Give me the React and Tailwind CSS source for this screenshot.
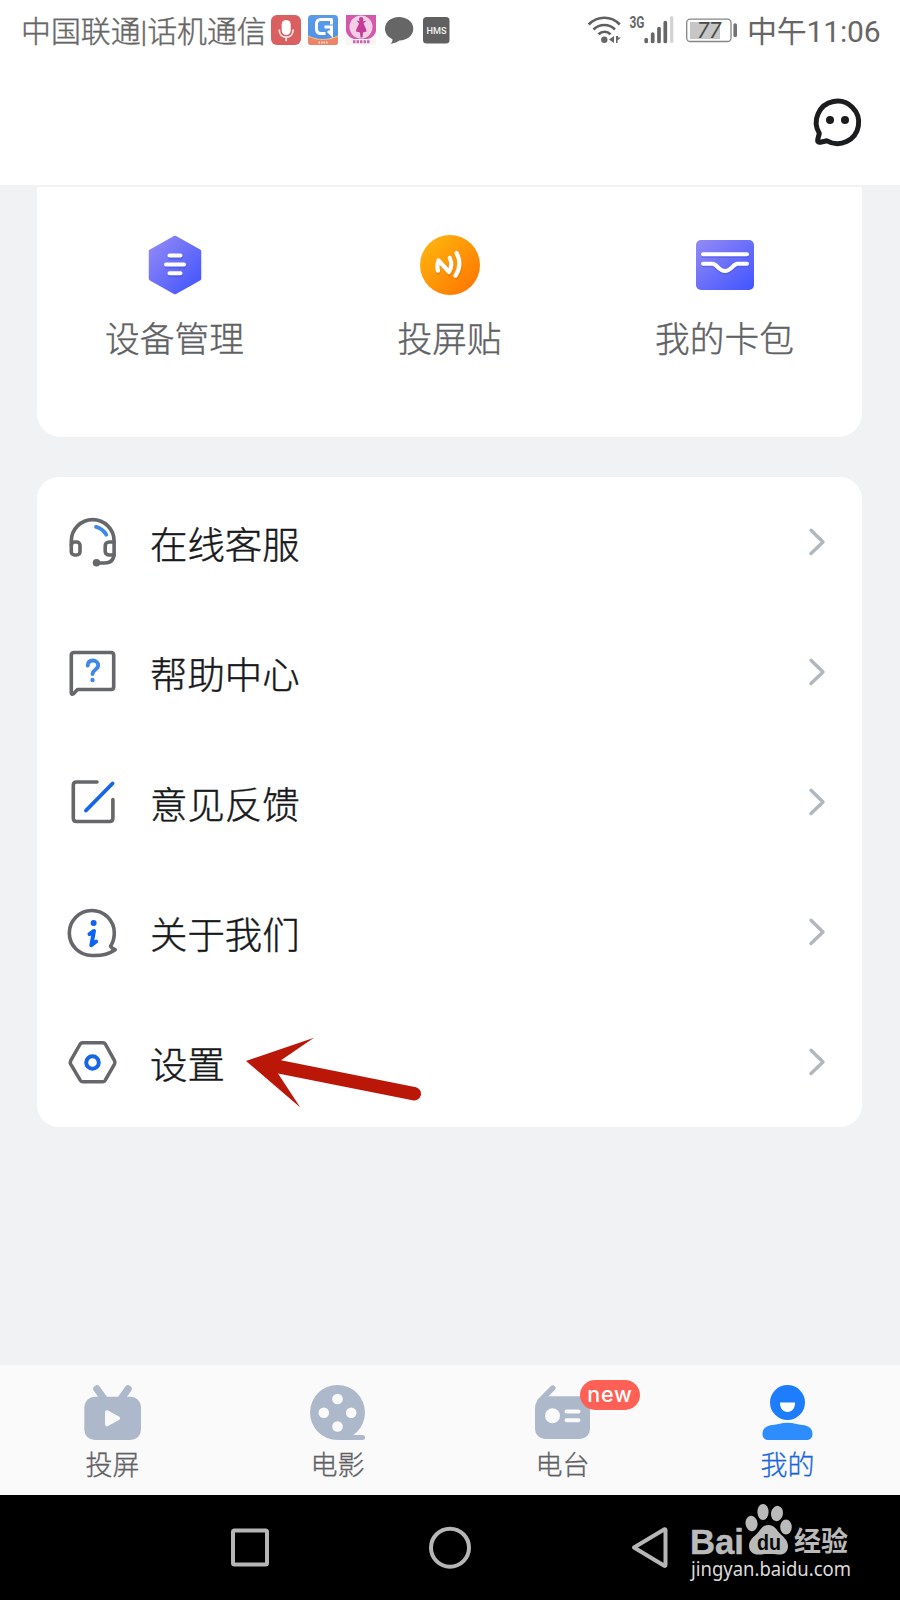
const GREY = '#66676a';
const MUTED = '#adb9cb';

/* Every drawing below uses the screen's own coordinate space through its viewBox. */
function Art({ x, y, w, h, className = '', children }) {
  return (
    <svg width={w} height={h} viewBox={`${x} ${y} ${w} ${h}`} fill="none" strokeLinecap="round" strokeLinejoin="round" className={`block shrink-0 ${className}`}>
      {children}
    </svg>
  );
}

function NotificationIcons() {
  return (
    <Art x={268} y={10} w={184} h={40}>
      <defs>
        <linearGradient id="appBlue" x1="0" y1="0" x2="0" y2="1">
          <stop offset="0" stopColor="#5b9ce8" />
          <stop offset="1" stopColor="#4f8fe6" />
        </linearGradient>
      </defs>
      <rect x="271" y="15" width="30" height="30" rx="6" fill="#d95f60" />
      <rect x="281.700" y="20" width="9" height="15" rx="4.500" fill="#fff" />
      <path d="M279.300 30c0 4.600 3 7.200 6.900 7.200s6.900-2.600 6.900-7.200M286.200 37.500v3" stroke="#fbe9e9" strokeWidth="1.700" />
      <rect x="308" y="15" width="30" height="30" rx="3.500" fill="url(#appBlue)" />
      <path d="M308 36c5 2.500 10 3.500 15 3.500s10-1 15-3.500v6a3 3 0 0 1-3 3h-24a3 3 0 0 1-3-3z" fill="#ee8467" />
      <path d="M308 36c5 2.500 10 3.500 15 3.500s10-1 15-3.500" stroke="#f0c08a" strokeWidth="1.200" />
      <path d="M332.500 19.500h-11.500q-4.500 0-4.500 4.500v5q0 4.500 4.500 4.500h4.500M324.500 27h7v7.500l-3.500-3.500M331.500 19.500v5" stroke="#fff" strokeWidth="3" strokeLinecap="butt" strokeLinejoin="miter" />
      <path d="M318.500 42.600h9" stroke="#fbe3d8" strokeWidth="2" strokeDasharray="1.500 1" strokeLinecap="butt" />
      <rect x="346" y="15" width="30" height="30" fill="#faf3f8" />
      <path d="M346 15h30v16c-1 4-4 7-8 8h-14c-4-1-7-4-8-8z" fill="#d458ac" />
      <circle cx="361" cy="27" r="11.500" fill="#f3cfe6" />
      <path d="M361 17c2.500 0 3 3 1.500 4.500l4-1-3 3c.8 2 3 5 3 8l-3.500 1-.5 5h-2l-.5-5-4-1c0-3 2.500-6 3-8l-2.500-3 3.500 1c-1.500-1.500-1.200-4.500 1-4.500z" fill="#c43a98" />
      <path d="M353 41.700h16.500" stroke="#cc62ab" strokeWidth="3" strokeDasharray="2.500 1" strokeLinecap="butt" />
      <path d="M399 17c8 0 14.300 5 14.300 11.800S407 40.500 399.500 40.500c-2 1.500-5 3-8.800 3.200 1.300-1.200 1.900-2.800 1.700-4.500-4.500-2-7.400-5.700-7.400-10.400C385 22 391 17 399 17z" fill="#666" />
      <rect x="423" y="17" width="26.500" height="26.500" rx="3.500" fill="#606060" />
      <text x="426.500" y="33.500" textLength="20" lengthAdjust="spacingAndGlyphs" fontFamily="Roboto, sans-serif" fontSize="8.500" fontWeight="500" fill="#f2f2f2">HMS</text>
    </Art>
  );
}

function SystemIcons() {
  return (
    <Art x={584} y={10} w={156} h={40}>
      <g stroke="#5f5f5f" strokeWidth="2.600" strokeLinecap="butt">
        <path d="M588.700 24.500c9-9 22.500-9 31 0" />
        <path d="M593.500 29.500c6.200-6 15.600-6 21.500 0" />
        <path d="M598.500 34.300c3.500-3.400 8.800-3.400 12 0" />
      </g>
      <circle cx="604.300" cy="39.800" r="3.200" fill="#666" />
      <path d="M614 36v7l-5-3.500zM616 36v7l1.500 0v-2.500l3.500-3h-3V36z" fill="#666" />
      <text x="629.500" y="27.800" textLength="15" lengthAdjust="spacingAndGlyphs" fontFamily="Roboto, sans-serif" fontSize="16" fontWeight="700" fill="#666">3G</text>
      <path d="M646.200 39.500v2M652.700 34v7.500M659 28.500v13M665.300 22.500v19" stroke="#666" strokeWidth="3.700" />
      <path d="M671.700 17.500v24" stroke="#d2d2d2" strokeWidth="3.200" />
      <rect x="686.700" y="19.200" width="44.300" height="22.300" rx="3.500" stroke="#858585" strokeWidth="1.300" />
      <rect x="690" y="22" width="30" height="17" fill="#c6c6c6" />
      <path d="M735.200 25v10.500" stroke="#737373" strokeWidth="3.600" />
      <text x="697" y="38" textLength="24" lengthAdjust="spacingAndGlyphs" fontFamily="Roboto, sans-serif" fontSize="22" fontStyle="italic" fill="#4a4a4a">77</text>
    </Art>
  );
}

function ChatIcon() {
  return (
    <Art x={810} y={94} w={56} h={56}>
      <path d="M819.300 133.300A21.200 21.200 0 1 1 827 140.800L820.300 142.200Q817.200 142.600 817.700 139.700Z" stroke="#1b1c1e" strokeWidth="5" />
      <circle cx="830" cy="120" r="4" fill="#1b1c1e" />
      <circle cx="845" cy="120" r="4" fill="#1b1c1e" />
    </Art>
  );
}

function PurpleGradient({ id }) {
  return (
    <linearGradient id={id} x1="0" y1="0" x2="1" y2="1">
      <stop offset="0" stopColor="#938af5" />
      <stop offset="1" stopColor="#4154ff" />
    </linearGradient>
  );
}

function DeviceIcon() {
  return (
    <Art x={142} y={233} w={65} h={64}>
      <defs><PurpleGradient id="hexFill" /></defs>
      <path d="M175 238l24 13.500v27L175 292l-24-13.500v-27z" fill="url(#hexFill)" stroke="url(#hexFill)" strokeWidth="4.500" />
      <g strokeWidth="4">
        <path d="M170 257.500h11M166.500 266.500h17.500M170 275.200h11" stroke="#4c50dc" opacity=".6" />
        <path d="M169.500 255.500h11M166 264.500h18M169.500 273.300h11" stroke="#fff" />
      </g>
    </Art>
  );
}

function StickerIcon() {
  return (
    <Art x={417} y={233} w={65} h={64}>
      <defs>
        <linearGradient id="coinFill" x1="0.100" y1="0.100" x2="0.900" y2="0.900">
          <stop offset="0" stopColor="#ffb30f" />
          <stop offset="1" stopColor="#ff7800" />
        </linearGradient>
      </defs>
      <circle cx="450" cy="265" r="30" fill="url(#coinFill)" />
      <g strokeWidth="4.200">
        <path d="M438.500 272.500c-.7-3.500-.6-7.500.6-10.500l10.100 12c2.800-4 3-9.300 1-14.500M457.500 255c3.600 6.500 3.500 15-.8 22.500" stroke="#d96400" opacity=".35" />
        <path d="M437.900 270.700c-.7-3.500-.6-7.300.6-10.200l10.500 11.500c2.600-4.200 2.800-9.500.8-14M456.500 253c3.800 6.800 3.600 15.300-.9 22.700" stroke="#fff" />
      </g>
    </Art>
  );
}

function WalletIcon() {
  return (
    <Art x={692} y={233} w={65} h={64}>
      <defs><PurpleGradient id="cardFill" /></defs>
      <rect x="696" y="240" width="58" height="50" rx="5" fill="url(#cardFill)" />
      <g strokeWidth="4" transform="translate(.3 1.600)" stroke="#4a50d8" opacity=".45">
        <path d="M703 254.300h44M703 263.700h9.500c4.500 0 6 7.300 12.500 7.300s8-7.300 12.500-7.300h9.500" />
      </g>
      <path d="M703 254.300h44M703 263.700h9.500c4.500 0 6 7.300 12.500 7.300s8-7.300 12.500-7.300h9.500" stroke="#fff" strokeWidth="4" />
    </Art>
  );
}

function HeadsetIcon() {
  return (
    <Art x={64} y={514} w={56} h={56}>
      <g stroke={GREY} strokeWidth="3.600">
        <path d="M71.300 545v-4a21.400 21.400 0 0 1 42.800 0v12c0 6.500-3.500 10-9.500 10H97" />
        <rect x="71.300" y="542" width="8.700" height="13" rx="3.300" />
        <path d="M114.100 542h-4.900c-2.300 0-4 1.500-4 3.800v5.400c0 2.300 1.700 3.800 4 3.800h4.900" />
      </g>
      <circle cx="96.500" cy="562.800" r="3.800" fill={GREY} />
      <path d="M96 526.900c4.600 1.200 8 3.900 10.300 7.800" stroke="#4088e8" strokeWidth="3.800" />
    </Art>
  );
}

function HelpIcon() {
  return (
    <Art x={64} y={644} w={56} h={56}>
      <path d="M74 652.500h37q2.700 0 2.700 2.700v31.600q0 2.700-2.700 2.700H77.500l-4 4.200q-2.200 1.300-2.200-1V655.200q0-2.700 2.700-2.700z" stroke={GREY} strokeWidth="3.600" />
      <path d="M87.700 665.500c.2-3.500 2.400-5 5.200-5s5.300 2 5.300 4.800c0 4.500-5.700 4.500-5.700 8.800" stroke="#4088e8" strokeWidth="3.900" />
      <circle cx="92.500" cy="680" r="2.200" fill="#4088e8" />
    </Art>
  );
}

function FeedbackIcon() {
  return (
    <Art x={64} y={774} w={56} h={56}>
      <path d="M97 782H76.500q-3.200 0-3.200 3.200v33.100q0 3.200 3.200 3.200h33.200q3.200 0 3.200-3.200V799.500" stroke={GREY} strokeWidth="3.600" />
      <path d="M86 810.500L112.500 783.500" stroke="#1766e8" strokeWidth="3.900" />
    </Art>
  );
}

function AboutIcon() {
  return (
    <Art x={64} y={904} w={56} h={56}>
      <path d="M110.500 946.300C113.300 942 114.300 938 114.300 933A22.500 22.500 0 1 0 92 955.500C101 955.900 109 954 115.200 949.700Q112 948.800 110.500 946.300Z" stroke={GREY} strokeWidth="3.600" />
      <circle cx="93.600" cy="923" r="3" fill="#0d62f0" />
      <path d="M89.500 934.200l4.500-3.200-2.700 14.300 4.800-3.800" stroke="#0d62f0" strokeWidth="4" />
    </Art>
  );
}

function SettingsIcon() {
  return (
    <Art x={64} y={1034} w={56} h={56}>
      <path d="M82.500 1042.700h20.500q1.500 0 2.300 1.300l9.200 16.700q.9 1.700 0 3.400l-9.200 16.100q-.8 1.500-2.300 1.500H82.500q-1.500 0-2.300-1.500l-9.500-16.100q-.9-1.700 0-3.400l9.500-16.700q.8-1.300 2.300-1.300z" stroke={GREY} strokeWidth="3.500" />
      <circle cx="92.500" cy="1062.500" r="6.300" stroke="#1766e8" strokeWidth="4" />
    </Art>
  );
}

function Chevron() {
  return (
    <Art x={805} y={525} w={24} h={34}>
      <path d="M811 530.200L823 542 811 553.500" stroke="#b2b7be" strokeWidth="3.400" />
    </Art>
  );
}

function Arrow() {
  return (
    <Art x={240} y={1030} w={190} h={84} className="pointer-events-none absolute left-[203px] top-[33px]">
      <path d="M246 1061L314 1037.700 281 1060.300 416 1087.200A6.600 6.600 0 0 1 412.500 1100.200L278 1073.500 300.300 1107.500z" fill="#bb1708" />
    </Art>
  );
}

function CastTab() {
  return (
    <Art x={80} y={1380} w={65} h={64}>
      <path d="M97 1389l7 10M128 1389l-7 10" stroke={MUTED} strokeWidth="7.400" />
      <rect x="84.300" y="1396.700" width="56.700" height="43.300" rx="10.500" fill={MUTED} />
      <path d="M107 1412.300l11 6-11 6z" fill="#fafafa" stroke="#fafafa" strokeWidth="4" />
    </Art>
  );
}

function MovieTab() {
  return (
    <Art x={305} y={1380} w={65} h={64}>
      <circle cx="337.500" cy="1412.500" r="27.500" fill={MUTED} />
      <path d="M337 1440h25.500a2.500 2.500 0 0 0 0-5H352z" fill={MUTED} />
      <g fill="#fafafa">
        <circle cx="337.500" cy="1399" r="5.300" />
        <circle cx="323.800" cy="1412.700" r="5.300" />
        <circle cx="351.200" cy="1412.700" r="5.300" />
        <circle cx="337.500" cy="1426.500" r="5.300" />
      </g>
    </Art>
  );
}

function RadioTab() {
  return (
    <Art x={530} y={1380} w={65} h={64}>
      <path d="M540 1401L552.800 1388" stroke={MUTED} strokeWidth="5.400" />
      <path d="M535 1408c0-4 1.500-6.500 4-9l10-2.700h31a10 10 0 0 1 10 10v22.700a10 10 0 0 1-10 10h-35a10 10 0 0 1-10-10z" fill={MUTED} />
      <circle cx="552.500" cy="1415.700" r="7.500" fill="#fafafa" />
      <path d="M566.500 1411.500h12M566.500 1420.200h12" stroke="#fafafa" strokeWidth="4" />
    </Art>
  );
}

function MeTab() {
  return (
    <Art x={755} y={1380} w={65} h={64}>
      <circle cx="787.500" cy="1402.500" r="17.500" fill="#1d7dfd" />
      <path d="M780 1402.500h15c0 6-3 9.500-7.500 9.500s-7.500-3.500-7.500-9.500z" fill="#fff" />
      <path d="M787.500 1422.800c6 0 10 1.700 15 2.200 6.500.7 10 3.500 10 9 0 4-2.500 6-6.500 6h-37c-4 0-6.500-2-6.500-6 0-5.500 3.500-8.300 10-9 5-.5 9-2.200 15-2.200z" fill="#2d8dff" />
    </Art>
  );
}

function Watermark() {
  return (
    <Art x={684} y={1500} w={172} h={84} className="absolute left-[684px] top-[5px]">
      <g fill="#bababa">
        <text x="690" y="1553.500" textLength="54" lengthAdjust="spacingAndGlyphs" fontFamily="Liberation Sans, sans-serif" fontSize="35" fontWeight="700" stroke="#bababa" strokeWidth=".5">Bai</text>
        <ellipse cx="751.500" cy="1523.500" rx="6" ry="7.700" transform="rotate(-8 751.500 1523.500)" />
        <ellipse cx="763" cy="1512" rx="5.600" ry="8" />
        <ellipse cx="777" cy="1513.500" rx="6" ry="7.700" transform="rotate(10 777 1513.500)" />
        <ellipse cx="786" cy="1527" rx="5.800" ry="7.500" />
        <path d="M768.500 1525c5.500 0 7.500 4 10.500 7.500s9 7 9 13.500-4.500 9-9.500 8.500c-6-.6-13-.6-19 0-6 .5-10.500-3-10.500-8.500 0-6.500 5.500-9.500 9-13.500s5-7.500 10.500-7.500z" />
        <text x="794" y="1550.500" textLength="54" lengthAdjust="spacingAndGlyphs" fontFamily="Noto Sans CJK SC, sans-serif" fontSize="27" fontWeight="700">经验</text>
      </g>
      <text x="757" y="1550" textLength="24" lengthAdjust="spacingAndGlyphs" fontFamily="Liberation Sans, sans-serif" fontSize="22" fontWeight="700" fill="#080808">du</text>
      <text x="691" y="1575.500" textLength="160" lengthAdjust="spacingAndGlyphs" fontFamily="Noto Sans, Open Sans, sans-serif" fontSize="20" fill="#dcdcdc">jingyan.baidu.com</text>
    </Art>
  );
}

const shortcuts = [
  { label: '设备管理', Icon: DeviceIcon },
  { label: '投屏贴', Icon: StickerIcon },
  { label: '我的卡包', Icon: WalletIcon },
];

const menu = [
  { label: '在线客服', Icon: HeadsetIcon },
  { label: '帮助中心', Icon: HelpIcon },
  { label: '意见反馈', Icon: FeedbackIcon },
  { label: '关于我们', Icon: AboutIcon },
  { label: '设置', Icon: SettingsIcon, pointed: true },
];

const tabs = [
  { label: '投屏', Icon: CastTab },
  { label: '电影', Icon: MovieTab },
  { label: '电台', Icon: RadioTab, badge: 'new' },
  { label: '我的', Icon: MeTab, active: true },
];

export default function App() {
  return (
    <div className="flex h-[1600px] w-[900px] flex-col overflow-hidden bg-[#f1f2f4] font-['Roboto','Noto_Sans_CJK_SC',sans-serif]">
      <header className="h-[187px] shrink-0 border-b-2 border-[#f1f2f3] bg-white">
        <div className="flex h-[60px] items-center pl-[21px] pr-5 text-[#666]">
          <span className="w-[247px] whitespace-nowrap pt-1 text-[29.9px] font-light leading-[56px] [-webkit-text-stroke:0.4px]">中国联通|话机通信</span>
          <NotificationIcons />
          <div className="ml-auto flex items-center gap-[7px]">
            <SystemIcons />
            <span className="w-[133px] whitespace-nowrap pt-1 text-[30px] leading-[56px] tracking-[-0.2px]">中午11:06</span>
          </div>
        </div>
        <div className="flex justify-end pr-[34px] pt-[34px]"><ChatIcon /></div>
      </header>

      <main className="flex grow flex-col pl-[37px] pr-[38px]">
        <section className="grid h-[250px] grid-cols-3 rounded-b-[24px] bg-white pt-[46px]">
          {shortcuts.map(({ label, Icon }) => (
            <div key={label} className="flex flex-col items-center">
              <Icon />
              <span className="mt-[17px] text-[34.7px] font-light leading-[52px] text-[#606164] [-webkit-text-stroke:0.4px]">{label}</span>
            </div>
          ))}
        </section>

        <section className="mt-10 h-[650px] rounded-[22px] bg-white">
          {menu.map(({ label, Icon, pointed }) => (
            <div key={label} className="relative flex h-[130px] items-center pl-[27px] pr-[33px]">
              <Icon />
              <span className="ml-[30px] mt-[7px] text-[37.4px] font-light leading-[54px] text-[#17181a] [-webkit-text-stroke:0.45px]">{label}</span>
              <span className="ml-auto"><Chevron /></span>
              {pointed && <Arrow />}
            </div>
          ))}
        </section>
      </main>

      <nav className="grid h-[130px] shrink-0 grid-cols-4 bg-[#fafafa] pt-[15px]">
        {tabs.map(({ label, Icon, badge, active }) => (
          <div key={label} className="relative flex flex-col items-center">
            <Icon />
            <span className={`mt-[3px] text-[27px] font-light leading-[38px] [-webkit-text-stroke:0.3px] ${active ? 'text-[#1766dc]' : 'text-[#606164]'}`}>{label}</span>
            {badge && (
              <span className="absolute left-[130px] top-0 flex h-[30px] w-[60px] items-center justify-center rounded-full bg-[#ff6055] pb-px text-[21.5px] font-medium leading-none tracking-[0.8px] text-white font-['Inter','Roboto',sans-serif]">{badge}</span>
            )}
          </div>
        ))}
      </nav>

      <footer className="relative h-[105px] shrink-0 bg-black">
        <div className="flex h-full items-center justify-center gap-[152px] pt-px">
          <Art x={226} y={1524} w={48} h={48}>
            <rect x="233" y="1530.500" width="34" height="34" rx="1.500" stroke="#b6b6b6" strokeWidth="4" />
          </Art>
          <Art x={426} y={1524} w={48} h={48}>
            <circle cx="450" cy="1547.700" r="19" stroke="#b6b6b6" strokeWidth="4" />
          </Art>
          <Art x={626} y={1524} w={48} h={48}>
            <path d="M634 1547.500L664.500 1529.200Q665.500 1529 665.500 1530V1565Q665.500 1566.300 664.300 1565.700Z" stroke="#b6b6b6" strokeWidth="4" />
          </Art>
        </div>
        <Watermark />
      </footer>
    </div>
  );
}
